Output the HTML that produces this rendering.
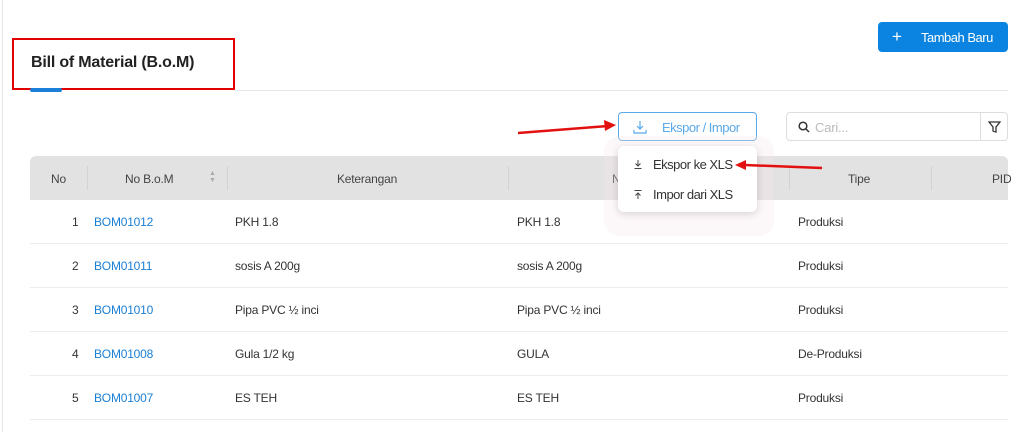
<!DOCTYPE html>
<html><head><style>
*{box-sizing:border-box;margin:0;padding:0}
body{width:1024px;height:432px;background:#fff;font-family:"Liberation Sans",sans-serif;font-size:12px;color:#333;position:relative;overflow:hidden;letter-spacing:-0.2px}
.a{position:absolute}
.hd{top:156px;left:30px;width:978px;height:44px;background:#e2e2e2;border-radius:6px 6px 0 0}
.hc{position:absolute;top:172px;font-size:12px;color:#444}
.sep{position:absolute;top:166px;width:1px;height:24px;background:#d2d2d2}
.row{position:absolute;left:30px;width:978px;height:44px;border-bottom:1px solid #ececec}
.t{position:absolute;font-size:12px;color:#333}
.lnk{color:#1a7fd4}
</style></head><body>
<div class="a" style="left:2px;top:0;width:1px;height:432px;background:#e4e4e4"></div>
<div class="a" style="left:12px;top:38px;width:223px;height:52px;border:2px solid #e30000"></div>
<div class="a" style="left:31px;top:54px;font-size:16px;font-weight:bold;color:#222">Bill of Material (B.o.M)</div>
<div class="a" style="left:30px;top:88px;width:32px;height:4px;border-radius:2px;background:#1b7fd8"></div>
<div class="a" style="left:235px;top:90px;width:773px;height:1px;background:#e8e8e8"></div>
<div class="a" style="left:878px;top:22px;width:130px;height:30px;border-radius:4px;background:#0a84e0;color:#fff;font-size:13px"><span class="a" style="left:14px;top:5px;font-size:17px">+</span><span class="a" style="left:43px;top:8px;letter-spacing:-0.5px">Tambah Baru</span></div>
<div class="a" style="left:618px;top:112px;width:139px;height:29px;border:1px solid #5aa9ea;border-radius:4px;color:#5aa9ea;font-size:13px">
<svg class="a" style="left:14px;top:7px" width="14" height="14" viewBox="0 0 14 14" fill="none" stroke="#5aa9ea" stroke-width="1.2"><path d="M7 1v8M4 6l3 3 3-3M1 10v3h12v-3"/></svg>
<span class="a" style="left:43px;top:7px;letter-spacing:-0.5px">Ekspor / Impor</span></div>
<div class="a" style="left:786px;top:112px;width:222px;height:29px;border:1px solid #ddd;border-radius:4px">
<svg class="a" style="left:11px;top:8px" width="12" height="12" viewBox="0 0 12 12" fill="none" stroke="#333" stroke-width="1.5"><circle cx="5" cy="5" r="3.8"/><path d="M8 8l3 3"/></svg>
<span class="a" style="left:28px;top:7px;color:#bbb;font-size:13px">Cari...</span>
<div class="a" style="left:193px;top:0;width:1px;height:27px;background:#ddd"></div>
<svg class="a" style="left:201px;top:8px" width="13" height="12" viewBox="0 0 13 12" fill="none" stroke="#333" stroke-width="1.3"><path d="M1 1h11L8 6v5L5 10V6z"/></svg>
</div>
<div class="a hd"></div>
<div class="hc" style="left:51px">No</div>
<div class="sep" style="left:87px"></div>
<div class="hc" style="left:125px">No B.o.M</div>
<div class="a" style="left:209px;top:170px;color:#aaa;font-size:7px;line-height:7px">▲<br>▼</div>
<div class="sep" style="left:227px"></div>
<div class="hc" style="left:337px">Keterangan</div>
<div class="sep" style="left:508px"></div>
<div class="hc" style="left:612px">Nama</div>
<div class="sep" style="left:789px"></div>
<div class="hc" style="left:848px">Tipe</div>
<div class="sep" style="left:931px"></div>
<div class="hc" style="left:992px">PID</div>

<div class="row" style="top:200px"></div>
<div class="row" style="top:244px"></div>
<div class="row" style="top:288px"></div>
<div class="row" style="top:332px"></div>
<div class="row" style="top:376px"></div>

<div class="t" style="left:72px;top:215px">1</div><div class="t lnk" style="left:94px;top:215px">BOM01012</div><div class="t" style="left:235px;top:215px">PKH 1.8</div><div class="t" style="left:517px;top:215px">PKH 1.8</div><div class="t" style="left:798px;top:215px">Produksi</div>
<div class="t" style="left:72px;top:259px">2</div><div class="t lnk" style="left:94px;top:259px">BOM01011</div><div class="t" style="left:235px;top:259px">sosis A 200g</div><div class="t" style="left:517px;top:259px">sosis A 200g</div><div class="t" style="left:798px;top:259px">Produksi</div>
<div class="t" style="left:72px;top:303px">3</div><div class="t lnk" style="left:94px;top:303px">BOM01010</div><div class="t" style="left:235px;top:303px">Pipa PVC ½ inci</div><div class="t" style="left:517px;top:303px">Pipa PVC ½ inci</div><div class="t" style="left:798px;top:303px">Produksi</div>
<div class="t" style="left:72px;top:347px">4</div><div class="t lnk" style="left:94px;top:347px">BOM01008</div><div class="t" style="left:235px;top:347px">Gula 1/2 kg</div><div class="t" style="left:517px;top:347px">GULA</div><div class="t" style="left:798px;top:347px">De-Produksi</div>
<div class="t" style="left:72px;top:391px">5</div><div class="t lnk" style="left:94px;top:391px">BOM01007</div><div class="t" style="left:235px;top:391px">ES TEH</div><div class="t" style="left:517px;top:391px">ES TEH</div><div class="t" style="left:798px;top:391px">Produksi</div>

<div class="a" style="left:604px;top:136px;width:170px;height:100px;border-radius:16px;background:rgba(245,228,232,0.3)"></div>
<div class="a" style="left:618px;top:146px;width:139px;height:66px;background:#fff;border-radius:6px;box-shadow:0 2px 8px rgba(0,0,0,0.15)">
<svg class="a" style="left:16px;top:14px" width="8" height="9" viewBox="0 0 8 9" fill="none" stroke="#444" stroke-width="1"><path d="M4 0v6M1.5 3.5L4 6l2.5-2.5M0.5 8.5h7"/></svg>
<span class="a" style="left:35px;top:11px;font-size:13px;letter-spacing:-0.5px">Ekspor ke XLS</span>
<svg class="a" style="left:16px;top:44px" width="8" height="9" viewBox="0 0 8 9" fill="none" stroke="#444" stroke-width="1"><path d="M0.5 0.5h7M4 9V3M1.5 5.5L4 3l2.5 2.5"/></svg>
<span class="a" style="left:35px;top:41px;font-size:13px;letter-spacing:-0.5px">Impor dari XLS</span>
</div>
<svg class="a" style="left:0;top:0" width="1024" height="432">
<path d="M518 133L608 126" stroke="#e31010" stroke-width="2.5"/><path d="M616 125l-12-5 1 11z" fill="#e31010"/>
<path d="M822 168L745 165" stroke="#e31010" stroke-width="2.5"/><path d="M735 165l11-5 0 10z" fill="#e31010"/>
</svg>
</body></html>
